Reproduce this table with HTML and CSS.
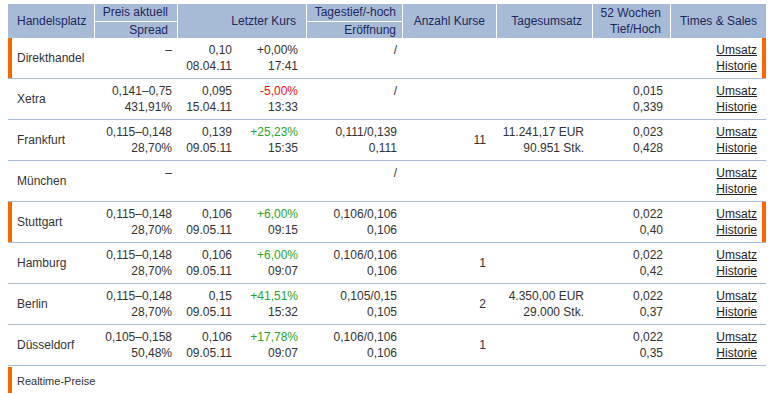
FILE: index.html
```html
<!DOCTYPE html>
<html lang="de">
<head>
<meta charset="utf-8">
<title>Handelsplätze</title>
<link rel="stylesheet" href="styles.css">
</head>
<body>
<div class="page">
  <table class="quotes">
    <colgroup>
      <col class="w1"><col class="w2"><col class="w3"><col class="w4"><col class="w5"><col class="w6"><col class="w7"><col class="w8"><col class="w9">
    </colgroup>
    <thead>
      <tr class="h1">
        <th rowspan="2" class="c1">Handelsplatz</th>
        <th class="c2 split">Preis aktuell</th>
        <th rowspan="2" colspan="2" class="c4">Letzter Kurs</th>
        <th class="c5 split">Tagestief/-hoch</th>
        <th rowspan="2" class="c6">Anzahl Kurse</th>
        <th rowspan="2" class="c7">Tagesumsatz</th>
        <th rowspan="2" class="c8">52 Wochen<br>Tief/Hoch</th>
        <th rowspan="2" class="c9">Times &amp; Sales</th>
      </tr>
      <tr class="h2">
        <th class="c2">Spread</th>
        <th class="c5">Eröffnung</th>
      </tr>
    </thead>
    <tbody>
      <tr class="mark">
        <td class="c1">Direkthandel</td>
        <td class="c2">–</td>
        <td class="c3">0,10<br>08.04.11</td>
        <td class="c4">+0,00%<br>17:41</td>
        <td class="c5">/</td>
        <td class="c6"></td>
        <td class="c7"></td>
        <td class="c8"></td>
        <td class="c9"><a href="#">Umsatz</a><br><a href="#">Historie</a></td>
      </tr>
      <tr>
        <td class="c1">Xetra</td>
        <td class="c2">0,141–0,75<br>431,91%</td>
        <td class="c3">0,095<br>15.04.11</td>
        <td class="c4"><span class="down">-5,00%</span><br>13:33</td>
        <td class="c5">/</td>
        <td class="c6"></td>
        <td class="c7"></td>
        <td class="c8">0,015<br>0,339</td>
        <td class="c9"><a href="#">Umsatz</a><br><a href="#">Historie</a></td>
      </tr>
      <tr>
        <td class="c1">Frankfurt</td>
        <td class="c2">0,115–0,148<br>28,70%</td>
        <td class="c3">0,139<br>09.05.11</td>
        <td class="c4"><span class="up">+25,23%</span><br>15:35</td>
        <td class="c5">0,111/0,139<br>0,111</td>
        <td class="c6">11</td>
        <td class="c7">11.241,17 EUR<br>90.951 Stk.</td>
        <td class="c8">0,023<br>0,428</td>
        <td class="c9"><a href="#">Umsatz</a><br><a href="#">Historie</a></td>
      </tr>
      <tr>
        <td class="c1">München</td>
        <td class="c2">–</td>
        <td class="c3"></td>
        <td class="c4"></td>
        <td class="c5">/</td>
        <td class="c6"></td>
        <td class="c7"></td>
        <td class="c8"></td>
        <td class="c9"><a href="#">Umsatz</a><br><a href="#">Historie</a></td>
      </tr>
      <tr class="mark">
        <td class="c1">Stuttgart</td>
        <td class="c2">0,115–0,148<br>28,70%</td>
        <td class="c3">0,106<br>09.05.11</td>
        <td class="c4"><span class="up">+6,00%</span><br>09:15</td>
        <td class="c5">0,106/0,106<br>0,106</td>
        <td class="c6"></td>
        <td class="c7"></td>
        <td class="c8">0,022<br>0,40</td>
        <td class="c9"><a href="#">Umsatz</a><br><a href="#">Historie</a></td>
      </tr>
      <tr>
        <td class="c1">Hamburg</td>
        <td class="c2">0,115–0,148<br>28,70%</td>
        <td class="c3">0,106<br>09.05.11</td>
        <td class="c4"><span class="up">+6,00%</span><br>09:07</td>
        <td class="c5">0,106/0,106<br>0,106</td>
        <td class="c6">1</td>
        <td class="c7"></td>
        <td class="c8">0,022<br>0,42</td>
        <td class="c9"><a href="#">Umsatz</a><br><a href="#">Historie</a></td>
      </tr>
      <tr>
        <td class="c1">Berlin</td>
        <td class="c2">0,115–0,148<br>28,70%</td>
        <td class="c3">0,15<br>09.05.11</td>
        <td class="c4"><span class="up">+41,51%</span><br>15:32</td>
        <td class="c5">0,105/0,15<br>0,105</td>
        <td class="c6">2</td>
        <td class="c7">4.350,00 EUR<br>29.000 Stk.</td>
        <td class="c8">0,022<br>0,37</td>
        <td class="c9"><a href="#">Umsatz</a><br><a href="#">Historie</a></td>
      </tr>
      <tr>
        <td class="c1">Düsseldorf</td>
        <td class="c2">0,105–0,158<br>50,48%</td>
        <td class="c3">0,106<br>09.05.11</td>
        <td class="c4"><span class="up">+17,78%</span><br>09:07</td>
        <td class="c5">0,106/0,106<br>0,106</td>
        <td class="c6">1</td>
        <td class="c7"></td>
        <td class="c8">0,022<br>0,35</td>
        <td class="c9"><a href="#">Umsatz</a><br><a href="#">Historie</a></td>
      </tr>
    </tbody>
  </table>
  <div class="footer">Realtime-Preise</div>
</div>
</body>
</html>
```

FILE: styles.css
```css
body {
  margin: 0;
  background: #fff;
  color: #333;
  font-family: "Liberation Sans", Arial, sans-serif;
  font-size: 12px;
}

.page {
  padding: 4px 0 0 8px;
}

.quotes {
  border-collapse: separate;
  border-spacing: 0;
  table-layout: fixed;
  width: 758px;
}

.w1 { width: 87px; }
.w2 { width: 83px; }
.w3 { width: 60px; }
.w4 { width: 69px; }
.w5 { width: 96px; }
.w6 { width: 94px; }
.w7 { width: 96px; }
.w8 { width: 78px; }
.w9 { width: 95px; }

.quotes th {
  background: #a8bbd6;
  color: #1d265e;
  font-weight: normal;
  text-align: right;
  vertical-align: middle;
  white-space: nowrap;
  border-right: 1px solid #fff;
  padding: 0 9px 0 0;
  line-height: 16px;
}

.quotes th.c9 { border-right: 0; }

.quotes .h1 th.split {
  line-height: 17px;
  border-bottom: 1px solid #fff;
}

.quotes .h2 th {
  line-height: 16px;
}

.quotes th.c1 {
  text-align: left;
  padding-left: 9px;
}

.quotes th.c4 { padding-right: 10px; }
.quotes th.c5 { padding-right: 6px; }
.quotes th.c6 { padding-right: 11px; }
.quotes th.c7 { padding-right: 10px; }

.quotes td {
  padding: 4px 6px 4px 0;
  line-height: 16px;
  vertical-align: top;
  text-align: right;
  white-space: nowrap;
  border-bottom: 1px solid #a8bbd6;
}

.quotes td.c1 {
  text-align: left;
  padding-left: 9px;
  vertical-align: middle;
}

.quotes td.c2 { padding-right: 6px; }
.quotes td.c3 { padding-right: 6px; }
.quotes td.c4 { padding-right: 9px; }
.quotes td.c5 { padding-right: 6px; }
.quotes td.c6 { padding-right: 11px; vertical-align: middle; }
.quotes td.c7 { padding-right: 9px; }
.quotes td.c8 { padding-right: 8px; }
.quotes td.c9 { padding-right: 9px; }

.mark td.c1 { box-shadow: inset 4px 0 0 #ff6600; }
.mark td.c9 { box-shadow: inset -4px 0 0 #ff6600; }

.up { color: #2aa52a; }
.down { color: #f01010; }

.quotes a {
  color: #222;
  text-decoration: underline;
}

.footer {
  margin-top: 1px;
  height: 28px;
  line-height: 28px;
  padding-left: 9px;
  font-size: 11px;
  color: #333;
  box-shadow: inset 4px 0 0 #ff6600;
}
```
